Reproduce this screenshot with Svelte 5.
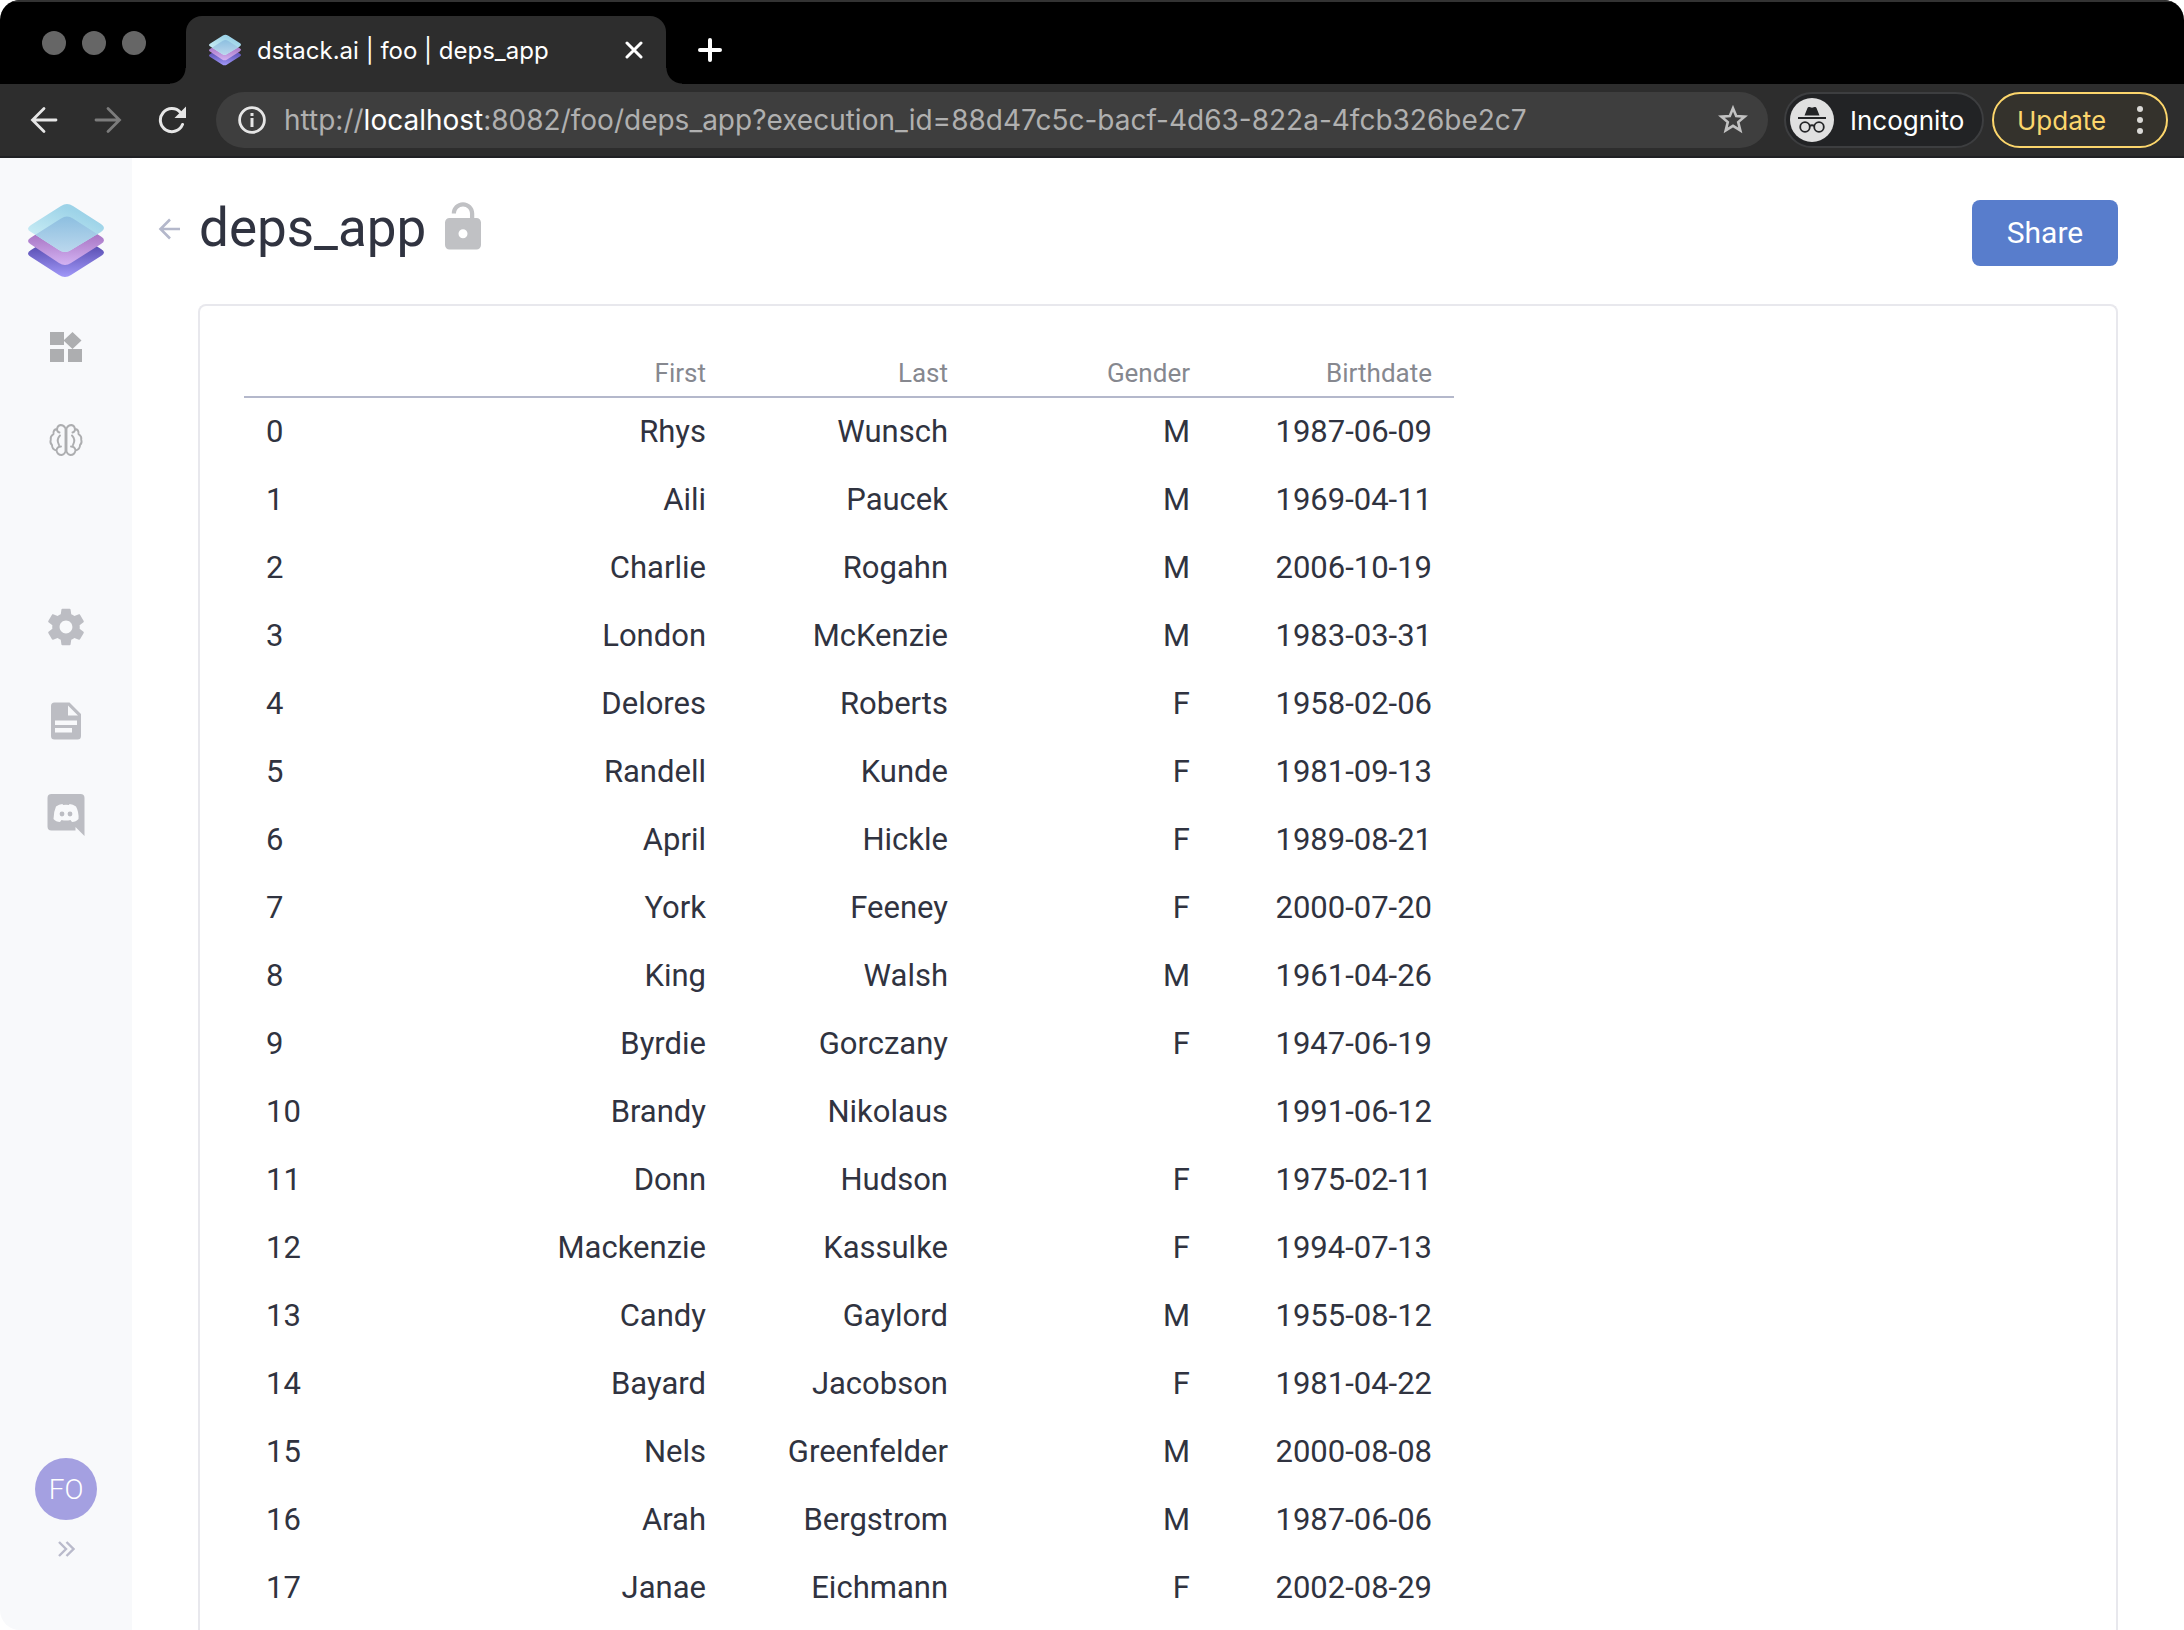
<script>
  const columns = ['First', 'Last', 'Gender', 'Birthdate'];
  const rows = [
    ['Rhys', 'Wunsch', 'M', '1987-06-09'],
    ['Aili', 'Paucek', 'M', '1969-04-11'],
    ['Charlie', 'Rogahn', 'M', '2006-10-19'],
    ['London', 'McKenzie', 'M', '1983-03-31'],
    ['Delores', 'Roberts', 'F', '1958-02-06'],
    ['Randell', 'Kunde', 'F', '1981-09-13'],
    ['April', 'Hickle', 'F', '1989-08-21'],
    ['York', 'Feeney', 'F', '2000-07-20'],
    ['King', 'Walsh', 'M', '1961-04-26'],
    ['Byrdie', 'Gorczany', 'F', '1947-06-19'],
    ['Brandy', 'Nikolaus', '', '1991-06-12'],
    ['Donn', 'Hudson', 'F', '1975-02-11'],
    ['Mackenzie', 'Kassulke', 'F', '1994-07-13'],
    ['Candy', 'Gaylord', 'M', '1955-08-12'],
    ['Bayard', 'Jacobson', 'F', '1981-04-22'],
    ['Nels', 'Greenfelder', 'M', '2000-08-08'],
    ['Arah', 'Bergstrom', 'M', '1987-06-06'],
    ['Janae', 'Eichmann', 'F', '2002-08-29'],
  ];
  const scheme = 'http://';
  const host = 'localhost';
  const path = ':8082/foo/deps_app?execution_id=88d47c5c-bacf-4d63-822a-4fcb326be2c7';
</script>

{#snippet logo(id)}
  <svg class="logo" viewBox="0 0 76 73" aria-hidden="true">
    <defs>
      <linearGradient id="{id}-a" x1="0" y1="0" x2="0" y2="1">
        <stop offset="0.3" stop-color="#5449ad" /><stop offset="1" stop-color="#a198f8" />
      </linearGradient>
      <linearGradient id="{id}-b" x1="0" y1="0" x2="0" y2="1">
        <stop offset="0.3" stop-color="#a470c0" /><stop offset="1" stop-color="#d3b2f2" />
      </linearGradient>
      <linearGradient id="{id}-c" x1="0.7" y1="0.2" x2="0.3" y2="0.8">
        <stop offset="0" stop-color="#9dd3e8" /><stop offset="1" stop-color="#c6ebf4" />
      </linearGradient>
      <linearGradient id="{id}-d" x1="0" y1="0" x2="0" y2="1">
        <stop offset="0" stop-color="#8dbfe0" /><stop offset="1" stop-color="#cbe0f2" />
      </linearGradient>
      <clipPath id="{id}-e"><path d="M33 2Q39-2 45 2L73 20Q79 24 73 28L43 46Q37 50 31 46L3 28Q-3 25 3 21Z" /></clipPath>
    </defs>
    <path fill="url(#{id}-a)" d="M33 27Q39 23 45 27L73 45Q79 48.500 73 52L43 71Q37 75 31 71L3 53Q-3 49.500 3 46Z" />
    <path fill="url(#{id}-b)" d="M33 14.500Q39 10.500 45 14.500L73 32.500Q79 36 73 40L43 59Q37 63 31 59L3 40.500Q-3 37 3 33.500Z" />
    <path fill="url(#{id}-c)" d="M33 2Q39-2 45 2L73 20Q79 24 73 28L43 46Q37 50 31 46L3 28Q-3 25 3 21Z" />
    <path clip-path="url(#{id}-e)" fill="url(#{id}-d)" d="M33 14.500Q39 10.500 45 14.500L73 32.500Q79 36 73 40L43 59Q37 63 31 59L3 40.500Q-3 37 3 33.500Z" />
  </svg>
{/snippet}

<div class="window">
  <header class="tabs">
    <div class="lights"><span></span><span></span><span></span></div>
    <div class="tab">
      {@render logo('tab')}
      <span class="tab-title">dstack.ai | foo | deps_app</span>
      <button class="bare" aria-label="Close tab">
        <svg width="18" height="18" viewBox="0 0 18 18"><path d="M2 2l14 14M16 2L2 16" stroke="#fff" stroke-width="3" stroke-linecap="round" /></svg>
      </button>
    </div>
    <button class="bare plus" aria-label="New tab">
      <svg width="26" height="26" viewBox="0 0 26 26"><path d="M13 3v20M3 13h20" stroke="#fff" stroke-width="4" stroke-linecap="round" /></svg>
    </button>
  </header>

  <div class="toolbar">
    <nav class="history" aria-label="History">
      <button class="bare" aria-label="Back">
        <svg width="28" height="28" viewBox="0 0 28 28"><path d="M26 14H3M14 2.500L2.500 14L14 25.500" fill="none" stroke="#e6e6e6" stroke-width="2.800" stroke-linecap="round" /></svg>
      </button>
      <button class="bare" aria-label="Forward">
        <svg width="28" height="28" viewBox="0 0 28 28"><path d="M2 14h23M14 2.500L25.500 14L14 25.500" fill="none" stroke="#7c7c7c" stroke-width="2.800" stroke-linecap="round" /></svg>
      </button>
      <button class="bare" aria-label="Reload">
        <svg width="28" height="28" viewBox="0 0 28 28"><path d="M24.500 18.500A11.500 11.500 0 1 1 22.500 6.500" fill="none" stroke="#e6e6e6" stroke-width="3" stroke-linecap="round" /><path d="M28 0.500V12H16.500Z" fill="#e6e6e6" /></svg>
      </button>
    </nav>
    <div class="omnibox">
      <svg width="28" height="28" viewBox="0 0 28 28"><circle cx="14" cy="14" r="12.400" fill="none" stroke="#e6e6e6" stroke-width="2.800" /><path d="M14 12v9M14 7v3" stroke="#e6e6e6" stroke-width="3" /></svg>
      <a class="url" href={scheme + host + path}>{scheme}<b>{host}</b>{path}</a>
      <button class="bare" aria-label="Bookmark">
        <svg width="30" height="30" viewBox="0 0 30 30"><path d="M15 3.200L18.200 11L26.700 11.600L20.200 17.100L22.300 25.400L15 20.900L7.700 25.400L9.800 17.100L3.300 11.600L11.800 11Z" fill="none" stroke="#c2c2c2" stroke-width="2.600" /></svg>
      </button>
    </div>
    <button class="incognito">
      <svg width="44" height="44" viewBox="0 0 44 44">
        <circle cx="22" cy="22" r="22" fill="#e0e0e0" />
        <path d="M14.500 17.500l3-7.500q.5-1.500 2-1l2.500.7l2.500-.7q1.500-.5 2 1l3 7.500Z" fill="#242527" />
        <path d="M8 20h28" stroke="#242527" stroke-width="2" />
        <g fill="none" stroke="#242527" stroke-width="1.800"><circle cx="15" cy="29" r="4.800" /><circle cx="29" cy="29" r="4.800" /><path d="M19.500 28q2.500-1.500 5 0" /></g>
      </svg>
      Incognito
    </button>
    <button class="update">
      Update
      <svg width="6" height="28" viewBox="0 0 6 28" fill="#d9d9d6"><circle cx="3" cy="3" r="3" /><circle cx="3" cy="14" r="3" /><circle cx="3" cy="25" r="3" /></svg>
    </button>
  </div>

  <div class="page">
    <aside>
      <a class="brand" href="#home" aria-label="Home">{@render logo('brand')}</a>
      <nav class="primary" aria-label="Main">
        <a href="#apps" aria-label="Applications">
          <svg width="38" height="38" viewBox="0 0 38 38" fill="#adaeb0"><path d="M3 4h14v13H3zM3 21h14v13H3zM21 21h14v13H21zM25.500 4L34.500 12.500L25.500 21L16.500 12.500Z" /></svg>
        </a>
        <a href="#models" aria-label="Models">
          <svg width="38" height="38" viewBox="0 0 38 38" fill="none" stroke="#adaeb0" stroke-width="1.900" stroke-linecap="round" stroke-linejoin="round">
            <path d="M18.500 7.500Q17 4 13.500 4Q10.500 4.500 10 8Q6 8.500 6.500 13Q3 15.500 3.800 18.500Q2.600 22 5 24Q5 28.500 9.500 29.500Q10.500 34 14.500 34Q17.500 33.500 18.500 30.500M10 8Q10 11 12.500 11.500M13 14.500Q9 18.500 12 24M9.500 29.500Q10 25.500 14 25.500M18.500 7.500V30.500" />
            <path d="M19.500 7.500Q21 4 24.500 4Q27.500 4.500 28 8Q32 8.500 31.500 13Q35 15.500 34.200 18.500Q35.400 22 33 24Q33 28.500 28.500 29.500Q27.500 34 23.500 34Q20.500 33.500 19.500 30.500M28 8Q28 11 25.500 11.500M25 14.500Q29 18.500 26 24M28.500 29.500Q28 25.500 24 25.500M19.500 7.500V30.500" />
          </svg>
        </a>
      </nav>
      <nav class="secondary" aria-label="More">
        <a href="#settings" aria-label="Settings">
          <svg width="44" height="44" viewBox="0 0 24 24" fill="#bcbdc3"><path d="M19.430 12.980c.04-.32.07-.64.07-.98s-.03-.66-.07-.98l2.110-1.650c.19-.15.24-.42.12-.64l-2-3.460c-.12-.22-.39-.3-.61-.22l-2.490 1c-.52-.4-1.080-.73-1.690-.98l-.38-2.650C14.460 2.180 14.250 2 14 2h-4c-.25 0-.46.18-.49.42l-.38 2.650c-.61.25-1.170.59-1.690.98l-2.490-1c-.23-.09-.49 0-.61.22l-2 3.460c-.13.22-.07.49.12.64l2.110 1.650c-.04.32-.07.65-.07.98s.03.66.07.98l-2.110 1.650c-.19.15-.24.42-.12.64l2 3.460c.12.22.39.3.61.22l2.490-1c.52.4 1.080.73 1.690.98l.38 2.650c.03.24.24.42.49.42h4c.25 0 .46-.18.49-.42l.38-2.650c.61-.25 1.170-.59 1.690-.98l2.490 1c.23.09.49 0 .61-.22l2-3.460c.12-.22.07-.49-.12-.64l-2.110-1.650zM12 15.500c-1.930 0-3.500-1.570-3.500-3.500s1.570-3.500 3.500-3.500 3.500 1.570 3.500 3.500-1.570 3.500-3.500 3.500z" /></svg>
        </a>
        <a href="#docs" aria-label="Documentation">
          <svg width="44" height="44" viewBox="0 0 44 44" fill="#bcbdc3"><path fill-rule="evenodd" d="M10 3.500h15.500L37 15v22q0 3.500-3.500 3.500H10.500Q7 40.500 7 37V7Q7 3.500 10.500 3.500ZM24 6.500V16.500H34ZM11 21.500v4.500h22v-4.500ZM11 29v4.500h17V29Z" /></svg>
        </a>
        <a href="#discord" aria-label="Discord">
          <svg width="44" height="44" viewBox="0 0 44 44"><path fill="#bcbdc3" d="M7.500 1h29q4 0 4 4v38l-9-9v3.500H7.500q-4 0-4-4V5q0-4 4-4Z" /><path fill="#f8f9fb" d="M12 13.500Q15 11 18.500 11L19 12Q22 11.500 25 12L25.500 11Q29 11 32 13.500Q35 19 34.500 26Q32 29 28 29L26.500 27Q22 28 17.500 27L16 29Q12 29 9.500 26Q9.500 19 12 13.500Z" /><circle cx="18" cy="21" r="2.400" fill="#bcbdc3" /><circle cx="26" cy="21" r="2.400" fill="#bcbdc3" /></svg>
        </a>
      </nav>
      <button class="avatar">FO</button>
      <button class="bare" aria-label="Expand menu">
        <svg width="18" height="18" viewBox="0 0 18 18"><path d="M2 2l7 7l-7 7M9.500 2l7 7l-7 7" fill="none" stroke="#b9bacb" stroke-width="2.400" /></svg>
      </button>
    </aside>

    <main>
      <div class="heading">
        <a class="back" href="#back" aria-label="Back to applications">
          <svg width="22" height="22" viewBox="0 0 22 22"><path d="M22 11H3M12 1.500L2.500 11L12 20.500" fill="none" stroke="#b4b8cb" stroke-width="2.600" /></svg>
        </a>
        <h1>deps_app</h1>
        <svg class="lock" width="54" height="54" viewBox="0 0 24 24" fill="#c0c1c4"><path fill-rule="evenodd" d="M18 8H17V6C17 3.240 14.760 1 12 1S7 3.240 7 6H8.900C8.900 4.290 10.290 2.900 12 2.900S15.100 4.290 15.100 6V8H6C4.900 8 4 8.900 4 10V20C4 21.100 4.900 22 6 22H18C19.100 22 20 21.100 20 20V10C20 8.900 19.100 8 18 8ZM12 13A2 2 0 1 1 12 17A2 2 0 1 1 12 13Z" /></svg>
        <button class="share">Share</button>
      </div>
      <section class="card">
        <table>
          <thead>
            <tr><td></td>{#each columns as column}<th scope="col">{column}</th>{/each}</tr>
          </thead>
          <tbody>
            {#each rows as row, index}
              <tr><th scope="row">{index}</th>{#each row as cell}<td>{cell}</td>{/each}</tr>
            {/each}
          </tbody>
        </table>
      </section>
    </main>
  </div>
</div>

<style>
  :global(body) { background: #fff; }
  * { box-sizing: border-box; }
  svg { display: block; flex: none; }
  button { font: inherit; cursor: pointer; }
  a { color: inherit; text-decoration: none; }
  .window {
    height: 100vh;
    display: flex;
    flex-direction: column;
    overflow: hidden;
    border-radius: 20px;
    font-family: Roboto, sans-serif;
    color: #303340;
  }
  .bare { display: flex; padding: 0; border: 0; background: none; }

  .tabs {
    display: flex;
    flex: none;
    height: 84px;
    padding: 14px 0 0 42px;
    border-top: 2px solid #333;
    background: #000;
    font-family: Inter, sans-serif;
  }
  .lights { display: flex; gap: 16px; width: 144px; padding-top: 15px; }
  .lights span { width: 24px; height: 24px; border-radius: 50%; background: #666; }
  .tab {
    position: relative;
    display: flex;
    align-items: center;
    width: 480px;
    padding: 0 23px;
    border-radius: 16px 16px 0 0;
    background: #2d2d2d;
    color: #fff;
    font-size: 24px;
  }
  .tab::before, .tab::after {
    content: '';
    position: absolute;
    bottom: 0;
    width: 16px;
    height: 16px;
  }
  .tab::before { right: 100%; background: radial-gradient(circle at 0 0, #000 15px, #2d2d2d 16px); }
  .tab::after { left: 100%; background: radial-gradient(circle at 100% 0, #000 15px, #2d2d2d 16px); }
  .tab .logo { width: 32px; height: 32px; }
  .tab-title { flex: 1; padding-left: 16px; }
  .plus { align-items: center; margin-left: 31px; }

  .toolbar {
    display: flex;
    flex: none;
    gap: 8px;
    height: 74px;
    padding: 8px 16px 8px 30px;
    border-bottom: 2px solid #202124;
    background: #2d2d2d;
    font-family: Inter, sans-serif;
    font-size: 26px;
  }
  .history { display: flex; align-items: center; gap: 36px; width: 178px; }
  .omnibox {
    display: flex;
    flex: 1;
    align-items: center;
    min-width: 0;
    margin-right: 8px;
    padding: 0 20px 0 22px;
    border-radius: 28px;
    background: #3e3e3e;
  }
  .url { flex: 1; min-width: 0; padding-left: 18px; overflow: hidden; white-space: nowrap; color: #b0b0b0; font-size: 28px; }
  .url b { font-weight: 400; color: #fff; }
  .incognito, .update { display: flex; align-items: center; border-radius: 28px; }
  .incognito {
    gap: 16px;
    width: 200px;
    padding: 0 4px;
    border: 2px solid #3d3e40;
    background: #222325;
    color: #fff;
  }
  .update {
    justify-content: space-between;
    width: 176px;
    padding: 0 23px;
    border: 2px solid #fcd66c;
    background: #34322c;
    color: #fcd66c;
  }

  .page { display: flex; flex: 1; min-height: 0; background: #fff; }
  aside {
    display: flex;
    flex: none;
    flex-direction: column;
    align-items: center;
    width: 132px;
    padding: 46px 0 72px;
    background: #f8f9fb;
  }
  .brand .logo { width: 76px; height: 73px; }
  nav a { display: block; }
  .primary { display: grid; gap: 55px; margin-top: 51px; }
  .secondary { display: grid; gap: 50px; margin-top: 146px; }
  .avatar {
    width: 62px;
    height: 62px;
    margin: auto 0 20px;
    padding: 0;
    border: 0;
    border-radius: 50%;
    background: #a4a0e1;
    color: #fff;
    font-size: 28px;
    font-weight: 300;
  }

  main {
    display: flex;
    flex: 1;
    flex-direction: column;
    min-width: 0;
    padding: 42px 66px 0;
  }
  .heading { display: flex; flex: none; height: 66px; margin-left: -40px; }
  .back { width: 41px; padding-top: 18px; }
  h1 { margin: 0; color: #303340; font-size: 53px; font-weight: 400; line-height: 56px; }
  .lock { margin-left: 10px; }
  .share {
    width: 146px;
    margin-left: auto;
    padding: 0;
    border: 0;
    border-radius: 8px;
    background: #587dcc;
    color: #fff;
    font-size: 30px;
    line-height: 64px;
  }
  .card {
    flex: 1;
    min-height: 0;
    margin-top: 38px;
    padding: 32px 44px 0;
    overflow: hidden;
    border: 2px solid #e8e8ed;
    border-bottom: 0;
    border-radius: 8px 8px 0 0;
  }
  table { width: 1210px; max-width: 100%; table-layout: fixed; border-collapse: separate; border-spacing: 0; }
  th, td { height: 68px; padding: 0 22px 2px; font-size: 31px; font-weight: 400; text-align: right; }
  thead th, thead td { height: 60px; padding-top: 12px; padding-bottom: 0; border-bottom: 2px solid #b4b8cb; color: #86888f; font-size: 26px; }
  tbody th { text-align: left; }
</style>
